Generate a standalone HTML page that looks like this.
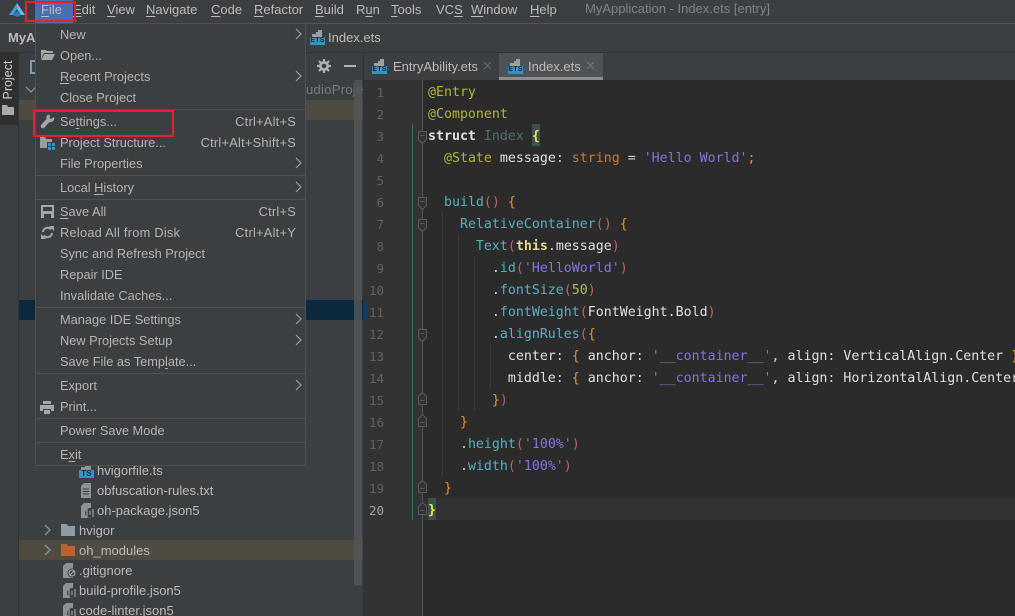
<!DOCTYPE html>
<html><head><meta charset="utf-8"><style>
html,body{margin:0;padding:0;background:#3c3f41}
#p{position:relative;width:1015px;height:616px;overflow:hidden;background:#3c3f41;font-family:"Liberation Sans",sans-serif;font-size:13px;color:#bbbbbb}
.a{position:absolute}
.t{position:absolute;white-space:pre;line-height:20px;height:20px}
.m{position:absolute;white-space:pre;line-height:20px;height:20px;font-size:12.8px;color:#b4b4b4}
.s{position:absolute;white-space:pre;line-height:20px;height:20px;right:719px;font-size:12.8px;letter-spacing:.25px;color:#b4b4b4}
.sep{position:absolute;left:36px;width:269px;height:1px;background:#515151}
.ar{position:absolute;left:295px}
u{text-underline-offset:2px}
.c{position:absolute;left:428px;white-space:pre;font-family:"DejaVu Sans Mono","Liberation Mono",monospace;font-size:13.28px;line-height:22px;height:22px;color:#d4d4d4}
.n{position:absolute;left:363px;width:21px;text-align:right;font-family:"DejaVu Sans Mono","Liberation Mono",monospace;font-size:12.5px;line-height:22px;color:#5f6263}
.k{color:#b5b52c}.b{color:#56b0c4}.p{color:#c0635c}.o{color:#f0902a}.v{color:#8a70e0}.r{color:#cc7832}.w{color:#e0e0e0}.g{position:absolute;width:1px;background:#3b3b3b}
.e{position:absolute;width:15px;height:16px}
.e i{position:absolute;left:0;top:8px;width:15px;height:8px;background:#3592c4;color:#22292d;font:bold 7px/8px "Liberation Sans",sans-serif;text-align:center;letter-spacing:.2px}
.e svg{position:absolute;left:0;top:0}
</style></head><body><div id="p">

<!-- top bars -->
<div class="a" style="left:0;top:23px;width:1015px;height:1px;background:#555"></div>
<div class="a" style="left:0;top:52px;width:1015px;height:1px;background:#323232"></div>
<div class="a" style="left:18px;top:52px;width:1px;height:564px;background:#323232"></div>
<svg class="a" style="left:8px;top:2px" width="18" height="16" viewBox="0 0 18 16"><path d="M9 1L1 13h4L9 7z" fill="#3f9bd8"/><path d="M9 1l8 12h-4L9 7z" fill="#68b9e8"/><path d="M5 13l4-4 4 4-4 2z" fill="#2f7fc0"/></svg>
<div class="a" style="left:35px;top:0;width:38px;height:23px;background:#4b6eaf"></div>
<div class="t" style="left:41px;top:0"><u>F</u>ile</div>
<div class="t" style="left:73px;top:0"><u>E</u>dit</div>
<div class="t" style="left:107px;top:0"><u>V</u>iew</div>
<div class="t" style="left:146px;top:0"><u>N</u>avigate</div>
<div class="t" style="left:211px;top:0"><u>C</u>ode</div>
<div class="t" style="left:254px;top:0"><u>R</u>efactor</div>
<div class="t" style="left:315px;top:0"><u>B</u>uild</div>
<div class="t" style="left:356px;top:0">R<u>u</u>n</div>
<div class="t" style="left:391px;top:0"><u>T</u>ools</div>
<div class="t" style="left:436px;top:0">VC<u>S</u></div>
<div class="t" style="left:471px;top:0"><u>W</u>indow</div>
<div class="t" style="left:530px;top:0"><u>H</u>elp</div>
<div class="t" style="left:585px;top:-1px;color:#808386">MyApplication - Index.ets [entry]</div>

<!-- nav bar -->
<div class="t" style="left:8px;top:28px;font-weight:bold">MyA</div>
<div class="e" style="left:310px;top:29px"><svg width="15" height="9"><path d="M2 8V5h4V3h2V1h4v7z" fill="#9aa0a4"/></svg><i>ETS</i></div>
<div class="t" style="left:328px;top:28px">Index.ets</div>

<!-- left strip -->
<div class="a" style="left:0;top:52px;width:18px;height:73px;background:#2d2f30"></div>
<div class="t" style="left:-15px;top:70px;transform:rotate(-90deg);width:46px;text-align:center;color:#d0d0d0;font-size:12.5px">Project</div>
<svg class="a" style="left:2px;top:105px" width="12" height="10"><path d="M0 0h5l1 2h6v8H0z" fill="#a8a8a8"/></svg>

<!-- tree rows -->
<div class="a" style="left:19px;top:100px;width:344px;height:20px;background:#4f4b41"></div>
<div class="a" style="left:19px;top:300px;width:344px;height:20px;background:#0d293e"></div>
<div class="a" style="left:19px;top:540px;width:344px;height:20px;background:#4f4b41"></div>
<svg class="a" style="left:25px;top:86px" width="12" height="8"><path d="M1 1l5 5 5-5" fill="none" stroke="#8f9295" stroke-width="1.3"/></svg>
<svg class="a" style="left:30px;top:60px" width="12" height="14"><rect x="1" y="1" width="10" height="12" fill="none" stroke="#6f9fc0" stroke-width="2"/></svg>
<div class="t" style="left:306px;top:80px;color:#777a7c;letter-spacing:.3px">udioProje</div>
<svg class="a" style="left:317px;top:59px" width="14" height="14" viewBox="0 0 14 14"><circle cx="7" cy="7" r="3.6" fill="none" stroke="#afb1b3" stroke-width="2.6"/><path d="M7 0v3M7 11v3M0 7h3M11 7h3M2 2l2 2M10 10l2 2M12 2l-2 2M4 10l-2 2" stroke="#afb1b3" stroke-width="2.2"/></svg>
<div class="a" style="left:344px;top:65px;width:12px;height:2px;background:#afb1b3"></div>

<div class="e" style="left:79px;top:462px"><svg width="15" height="9"><path d="M2 8V5h4V3h2V1h4v7z" fill="#8c9296"/></svg><i style="font-size:8px">TS</i></div>
<div class="t" style="left:97px;top:461px">hvigorfile.ts</div>
<svg class="a" style="left:81px;top:483px" width="11" height="15"><path d="M0 3l3-3h7v15H0z" fill="#8c9296"/><path d="M2 6h6M2 8.500h6M2 11h6" stroke="#3c3f41"/></svg>
<div class="t" style="left:97px;top:481px">obfuscation-rules.txt</div>
<svg class="a" style="left:81px;top:503px" width="14" height="15"><path d="M0 3l3-3h7v15H0z" fill="#8c9296"/><circle cx="9" cy="10" r="5" fill="#3c3f41"/><path d="M6 6v8M12 6v8M9 8v4" stroke="#afb1b3"/></svg>
<div class="t" style="left:97px;top:501px">oh-package.json5</div>
<svg class="a" style="left:44px;top:524px" width="8" height="12"><path d="M1 1l5 5-5 5" fill="none" stroke="#8f9295" stroke-width="1.3"/></svg>
<svg class="a" style="left:61px;top:524px" width="14" height="12"><path d="M0 0h6l1 2h7v10H0z" fill="#8c9ba5"/></svg>
<div class="t" style="left:79px;top:521px">hvigor</div>
<svg class="a" style="left:44px;top:544px" width="8" height="12"><path d="M1 1l5 5-5 5" fill="none" stroke="#8f9295" stroke-width="1.3"/></svg>
<svg class="a" style="left:61px;top:544px" width="14" height="12"><path d="M0 0h6l1 2h7v10H0z" fill="#c0602c"/></svg>
<div class="t" style="left:79px;top:541px">oh_modules</div>
<svg class="a" style="left:63px;top:563px" width="14" height="15"><path d="M0 3l3-3h7v15H0z" fill="#8c9296"/><circle cx="9" cy="10" r="4.500" fill="#3c3f41"/><circle cx="9" cy="10" r="3" fill="none" stroke="#afb1b3"/><path d="M7 12l4-4" stroke="#afb1b3"/></svg>
<div class="t" style="left:79px;top:561px">.gitignore</div>
<svg class="a" style="left:63px;top:583px" width="14" height="15"><path d="M0 3l3-3h7v15H0z" fill="#8c9296"/><circle cx="9" cy="10" r="5" fill="#3c3f41"/><path d="M6 6v8M12 6v8M9 8v4" stroke="#afb1b3"/></svg>
<div class="t" style="left:79px;top:581px">build-profile.json5</div>
<svg class="a" style="left:63px;top:603px" width="14" height="15"><path d="M0 3l3-3h7v15H0z" fill="#8c9296"/><circle cx="9" cy="10" r="5" fill="#3c3f41"/><path d="M6 6v8M12 6v8M9 8v4" stroke="#afb1b3"/></svg>
<div class="t" style="left:79px;top:601px">code-linter.json5</div>
<div class="a" style="left:354px;top:80px;width:8px;height:505px;background:#54575a;opacity:.8"></div>

<!-- tab bar -->
<div class="a" style="left:364px;top:53px;width:651px;height:26px;background:#3c3f41"></div>
<div class="a" style="left:363px;top:53px;width:1px;height:563px;background:#323232"></div>
<div class="a" style="left:499px;top:53px;width:104px;height:24px;background:#4e5254"></div>
<div class="a" style="left:499px;top:77px;width:104px;height:3px;background:#8a8d8f"></div>
<div class="e" style="left:372px;top:58px"><svg width="15" height="9"><path d="M2 8V5h4V3h2V1h4v7z" fill="#9aa0a4"/></svg><i>ETS</i></div>
<div class="t" style="left:393px;top:57px">EntryAbility.ets</div>
<svg class="a" style="left:483px;top:61px" width="10" height="10"><path d="M1 1l7 7M8 1l-7 7" stroke="#6a6d6f"/></svg>
<div class="e" style="left:508px;top:58px"><svg width="15" height="9"><path d="M2 8V5h4V3h2V1h4v7z" fill="#9aa0a4"/></svg><i>ETS</i></div>
<div class="t" style="left:528px;top:57px">Index.ets</div>
<svg class="a" style="left:586px;top:61px" width="10" height="10"><path d="M1 1l7 7M8 1l-7 7" stroke="#75787a"/></svg>

<!-- editor -->
<div class="a" style="left:364px;top:80px;width:59px;height:536px;background:#313335"></div>
<div class="a" style="left:423px;top:80px;width:592px;height:536px;background:#2b2b2b"></div>
<div class="a" style="left:423px;top:498px;width:592px;height:22px;background:#323232"></div>
<div class="a" style="left:422px;top:80px;width:1px;height:536px;background:#555"></div>
<div class="a" style="left:412px;top:124px;width:1px;height:396px;background:#44706a"></div>
<div class="a" style="left:364px;top:300px;width:3px;height:20px;background:#1b3a50"></div>

<div class="g" style="left:442px;top:212px;height:264px"></div>
<div class="g" style="left:458px;top:234px;height:176px"></div>
<div class="g" style="left:474px;top:256px;height:154px"></div>
<div class="g" style="left:490px;top:344px;height:44px"></div>

<svg class="a" style="left:417px;top:129px" width="11" height="394" viewBox="0 0 11 394" fill="#2f3133" stroke="#5a5d5f">
<path d="M1.500 2.500h8v8l-4 4-4-4z"/><path d="M3.500 6.500h4"/>
<path d="M1.500 68.500h8v8l-4 4-4-4z"/><path d="M3.500 72.500h4"/>
<path d="M1.500 90.500h8v8l-4 4-4-4z"/><path d="M3.500 94.500h4"/>
<path d="M1.500 200.500h8v8l-4 4-4-4z"/><path d="M3.500 204.500h4"/>
<path d="M1.500 267.500l4-4 4 4v8h-8z"/><path d="M3.500 271.500h4"/>
<path d="M1.500 289.500l4-4 4 4v8h-8z"/><path d="M3.500 293.500h4"/>
<path d="M1.500 355.500l4-4 4 4v8h-8z"/><path d="M3.500 359.500h4"/>
<path d="M1.500 377.500l4-4 4 4v8h-8z"/><path d="M3.500 381.500h4"/>
</svg>

<div class="n" style="top:82px">1</div><div class="n" style="top:104px">2</div><div class="n" style="top:126px">3</div><div class="n" style="top:148px">4</div><div class="n" style="top:170px">5</div><div class="n" style="top:192px">6</div><div class="n" style="top:214px">7</div><div class="n" style="top:236px">8</div><div class="n" style="top:258px">9</div><div class="n" style="top:280px">10</div><div class="n" style="top:302px">11</div><div class="n" style="top:324px">12</div><div class="n" style="top:346px">13</div><div class="n" style="top:368px">14</div><div class="n" style="top:390px">15</div><div class="n" style="top:412px">16</div><div class="n" style="top:434px">17</div><div class="n" style="top:456px">18</div><div class="n" style="top:478px">19</div><div class="n" style="top:500px;color:#a4a3a3">20</div>

<div class="a" style="left:532px;top:124px;width:8px;height:22px;background:#3b514d"></div>
<div class="a" style="left:428px;top:498px;width:8px;height:22px;background:#3b514d"></div>

<div class="c k" style="top:82px">@Entry</div>
<div class="c k" style="top:104px">@Component</div>
<div class="c" style="top:126px"><b class="w">struct</b> <span style="color:#4f6f6c">Index</span> <b style="color:#f5e33a">{</b></div>
<div class="c" style="top:148px">  <span class="k">@State</span> <span class="w">message</span>: <span class="r">string</span> = <span class="v">'Hello World'</span><span class="o">;</span></div>
<div class="c" style="top:192px">  <span class="b">build</span><span class="p">()</span> <span class="o">{</span></div>
<div class="c" style="top:214px">    <span class="b">RelativeContainer</span><span class="p">()</span> <span class="o">{</span></div>
<div class="c" style="top:236px">      <span class="b">Text</span><span class="p">(</span><b style="color:#e6d690">this</b>.<span class="w">message</span><span class="p">)</span></div>
<div class="c" style="top:258px">        .<span class="b">id</span><span class="p">(</span><span class="v">'HelloWorld'</span><span class="p">)</span></div>
<div class="c" style="top:280px">        .<span class="b">fontSize</span><span class="p">(</span><span style="color:#a5c25c">50</span><span class="p">)</span></div>
<div class="c" style="top:302px">        .<span class="b">fontWeight</span><span class="p">(</span><span class="w">FontWeight.Bold</span><span class="p">)</span></div>
<div class="c" style="top:324px">        .<span class="b">alignRules</span><span class="p">(</span><span class="o">{</span></div>
<div class="c" style="top:346px">          <span class="w">center</span>: <span class="o">{</span> <span class="w">anchor</span>: <span class="v">'__container__'</span>, <span class="w">align</span>: <span class="w">VerticalAlign.Center</span> <span class="o">}</span></div>
<div class="c" style="top:368px">          <span class="w">middle</span>: <span class="o">{</span> <span class="w">anchor</span>: <span class="v">'__container__'</span>, <span class="w">align</span>: <span class="w">HorizontalAlign.Center</span></div>
<div class="c" style="top:390px">        <span class="o">}</span><span class="p">)</span></div>
<div class="c" style="top:412px">    <span class="o">}</span></div>
<div class="c" style="top:434px">    .<span class="b">height</span><span class="p">(</span><span class="v">'100%'</span><span class="p">)</span></div>
<div class="c" style="top:456px">    .<span class="b">width</span><span class="p">(</span><span class="v">'100%'</span><span class="p">)</span></div>
<div class="c" style="top:478px">  <span class="o">}</span></div>
<div class="c" style="top:500px"><b style="color:#f5e33a">}</b></div>

<!-- menu -->
<div class="a" style="left:35px;top:23px;width:269px;height:441px;background:#3c3f41;border:1px solid #515151"></div>
<div class="m" style="left:60px;top:25px">New</div>
<div class="m" style="left:60px;top:46px">Open...</div>
<div class="m" style="left:60px;top:67px"><u>R</u>ecent Projects</div>
<div class="m" style="left:60px;top:88px">Close Project</div>
<div class="sep" style="top:109px"></div>
<div class="m" style="left:60px;top:112px">Se<u>t</u>tings...</div><div class="s" style="top:112px">Ctrl+Alt+S</div>
<div class="m" style="left:60px;top:133px">Project Structure...</div><div class="s" style="top:133px">Ctrl+Alt+Shift+S</div>
<div class="m" style="left:60px;top:154px">File Properties</div>
<div class="sep" style="top:175px"></div>
<div class="m" style="left:60px;top:178px">Local <u>H</u>istory</div>
<div class="sep" style="top:199px"></div>
<div class="m" style="left:60px;top:202px"><u>S</u>ave All</div><div class="s" style="top:202px">Ctrl+S</div>
<div class="m" style="left:60px;top:223px;letter-spacing:.25px">Reload All from Disk</div><div class="s" style="top:223px">Ctrl+Alt+Y</div>
<div class="m" style="left:60px;top:244px">Sync and Refresh Project</div>
<div class="m" style="left:60px;top:265px">Repair IDE</div>
<div class="m" style="left:60px;top:286px">Invalidate Caches...</div>
<div class="sep" style="top:307px"></div>
<div class="m" style="left:60px;top:310px">Manage IDE Settings</div>
<div class="m" style="left:60px;top:331px">New Projects Setup</div>
<div class="m" style="left:60px;top:352px">Save File as Temp<u>l</u>ate...</div>
<div class="sep" style="top:373px"></div>
<div class="m" style="left:60px;top:376px">Export</div>
<div class="m" style="left:60px;top:397px">Print...</div>
<div class="sep" style="top:418px"></div>
<div class="m" style="left:60px;top:421px">Power Save Mode</div>
<div class="sep" style="top:442px"></div>
<div class="m" style="left:60px;top:445px">E<u>x</u>it</div>

<svg class="ar" style="top:28px" width="7" height="12"><path d="M1 1l5 5-5 5" fill="none" stroke="#9a9c9e" stroke-width="1.2"/></svg>
<svg class="ar" style="top:70px" width="7" height="12"><path d="M1 1l5 5-5 5" fill="none" stroke="#9a9c9e" stroke-width="1.2"/></svg>
<svg class="ar" style="top:157px" width="7" height="12"><path d="M1 1l5 5-5 5" fill="none" stroke="#9a9c9e" stroke-width="1.2"/></svg>
<svg class="ar" style="top:181px" width="7" height="12"><path d="M1 1l5 5-5 5" fill="none" stroke="#9a9c9e" stroke-width="1.2"/></svg>
<svg class="ar" style="top:313px" width="7" height="12"><path d="M1 1l5 5-5 5" fill="none" stroke="#9a9c9e" stroke-width="1.2"/></svg>
<svg class="ar" style="top:334px" width="7" height="12"><path d="M1 1l5 5-5 5" fill="none" stroke="#9a9c9e" stroke-width="1.2"/></svg>
<svg class="ar" style="top:379px" width="7" height="12"><path d="M1 1l5 5-5 5" fill="none" stroke="#9a9c9e" stroke-width="1.2"/></svg>

<!-- menu icons -->
<svg class="a" style="left:41px;top:49px" width="14" height="12"><path d="M0 1h5l1 1h6v2H3L0 10z" fill="#a5a8aa"/><path d="M3.500 5H14l-3 6H0z" fill="#a5a8aa"/></svg>
<svg class="a" style="left:40px;top:114px" width="15" height="15" viewBox="0 0 15 15"><path d="M14 3l-3 2-1.500-1 .5-3C8 0 5.500 2 6.500 5L1 11c-1 2 1 4 3 3l5.500-6c3 1 5.500-2 4.500-5z" fill="#a5a8aa"/></svg>
<svg class="a" style="left:40px;top:136px" width="15" height="14"><path d="M0 1h5l1 2h6v9H0z" fill="#9a9da0"/><rect x="7" y="6" width="8" height="8" fill="#3c3f41"/><path d="M8 7h3v3H8zM12 7h3v3h-3zM8 11h3v3H8zM12 11h3v3h-3z" fill="#3592c4"/></svg>
<svg class="a" style="left:41px;top:205px" width="13" height="13"><path d="M0 0h13v13H0z" fill="#a5a8aa"/><rect x="2" y="2" width="9" height="4" fill="#3c3f41"/><rect x="3" y="9" width="7" height="4" fill="#3c3f41"/></svg>
<svg class="a" style="left:41px;top:226px" width="13" height="13" viewBox="0 0 13 13"><path d="M2 6a4.500 4.500 0 0 1 8-2.500M11 7a4.500 4.500 0 0 1-8 2.500" fill="none" stroke="#a5a8aa" stroke-width="2"/><path d="M8 0h5v5zM5 13H0V8z" fill="#a5a8aa"/></svg>
<svg class="a" style="left:40px;top:401px" width="14" height="13"><path d="M3 0h8v3H3zM0 4h14v6h-3V8H3v2H0zM4 9h6v4H4z" fill="#a5a8aa"/></svg>

<!-- red annotation boxes -->
<div class="a" style="left:25px;top:1px;width:47px;height:17px;border:2px solid #e8202a"></div>
<div class="a" style="left:33px;top:110px;width:137px;height:23px;border:2px solid #e8202a"></div>

</div></body></html>
